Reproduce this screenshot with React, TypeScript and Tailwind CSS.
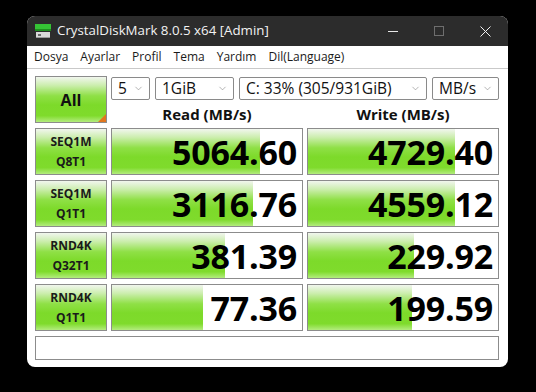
import { ChevronDown } from "lucide-react";

const FONT = { fontFamily: '"Open Sans", "Noto Sans", sans-serif' };

const BAR_BG =
  "bg-[linear-gradient(to_bottom,#f1f6ee_0%,#cdeeb0_18%,#8fe046_42%,#7dda2a_62%,#7fdb2c_86%,#b3ec7e_100%)]";

type Row = {
  name: string;
  sub: string;
  read: string;
  write: string;
  readPct: number;
  writePct: number;
};

const ROWS: Row[] = [
  { name: "SEQ1M", sub: "Q8T1", read: "5064.60", write: "4729.40", readPct: 78, writePct: 77.5 },
  { name: "SEQ1M", sub: "Q1T1", read: "3116.76", write: "4559.12", readPct: 74, writePct: 77.5 },
  { name: "RND4K", sub: "Q32T1", read: "381.39", write: "229.92", readPct: 59.5, writePct: 56 },
  { name: "RND4K", sub: "Q1T1", read: "77.36", write: "199.59", readPct: 48, writePct: 54.5 },
];

function Select({ value, width }: { value: string; width: string }) {
  return (
    <div
      className={`flex h-[23px] ${width} items-center justify-between rounded-[2px] border border-[#8a8a8a] bg-white pl-[6px] pr-[5px] text-[15.5px] text-[#111]`}
    >
      <span className="leading-none">{value}</span>
      <ChevronDown size={11} strokeWidth={1.2} className="text-[#777]" />
    </div>
  );
}

function ResultCell({ value, pct }: { value: string; pct: number }) {
  return (
    <div className="relative h-full border border-[#8c8c8c] bg-white">
      <div className={`absolute inset-y-0 left-0 ${BAR_BG}`} style={{ width: `${pct}%` }} />
      <div className="relative flex h-full items-center justify-end pr-[5px] text-[34px] font-bold leading-none tracking-[-0.2px] text-black">
        {value}
      </div>
    </div>
  );
}

function TitleIcon() {
  return (
    <svg width="16" height="15" viewBox="0 0 16 15">
      <rect x="0" y="0" width="16" height="5" fill="#35c335" />
      <rect x="0" y="5" width="16" height="2" fill="#1f8f1f" />
      <rect x="1" y="8" width="14" height="6" fill="#d9d9d9" />
      <rect x="1" y="13" width="14" height="1" fill="#9a9a9a" />
      <rect x="3" y="10" width="3" height="2" fill="#6b6b6b" />
    </svg>
  );
}

export default function App() {
  return (
    <div className="h-[392px] w-[536px] bg-black pl-[27px] pt-[16px]" style={FONT}>
      <div className="flex h-[351px] w-[481px] flex-col overflow-hidden rounded-[8px] bg-white">
        {/* title bar */}
        <div className="flex h-[30px] items-center bg-[#2c2c2c] pl-[8px] text-white">
          <TitleIcon />
          <span className="ml-[6px] text-[13.3px] leading-none text-[#f2f2f2]">
            CrystalDiskMark 8.0.5 x64 [Admin]
          </span>
          <div className="ml-auto flex h-full items-center">
            <div className="flex h-full w-[46px] items-center justify-center">
              <div className="h-px w-[10px] bg-[#e8e8e8]" />
            </div>
            <div className="flex h-full w-[46px] items-center justify-center">
              <div className="h-[10px] w-[10px] border border-[#6e6e6e]" />
            </div>
            <div className="flex h-full w-[46px] items-center justify-center">
              <svg width="11" height="11" viewBox="0 0 11 11">
                <path d="M0.5 0.5 L10.5 10.5 M10.5 0.5 L0.5 10.5" stroke="#f0f0f0" strokeWidth="1" />
              </svg>
            </div>
          </div>
        </div>

        {/* menu */}
        <div className="flex h-[23px] items-center gap-[12px] border-b border-[#c9c9c9] pl-[7px] text-[12px] text-[#1a1a1a]">
          <span>Dosya</span>
          <span>Ayarlar</span>
          <span>Profil</span>
          <span>Tema</span>
          <span>Yardım</span>
          <span>Dil(Language)</span>
        </div>

        {/* content */}
        <div className="flex flex-col gap-[5px] pl-[8px] pr-[9px] pt-[7px]">
          <div className="grid h-[47px] grid-cols-[72px_1fr] gap-x-[4px]">
            <div
              className={`relative flex items-center justify-center border border-[#8c8c8c] ${BAR_BG} text-[16px] font-bold text-[#111]`}
            >
              All
              <div className="absolute bottom-0 right-0 h-0 w-0 border-b-[8px] border-l-[8px] border-b-[#e2771e] border-l-transparent" />
            </div>
            <div className="flex flex-col">
              <div className="flex gap-[5px] pt-px">
                <Select value="5" width="w-[39px]" />
                <Select value="1GiB" width="w-[79px]" />
                <Select value="C: 33% (305/931GiB)" width="w-[188px]" />
                <Select value="MB/s" width="w-[67px]" />
              </div>
              <div className="grid flex-1 grid-cols-2 gap-x-[4px] pt-[6px] text-[15px] font-bold leading-none text-[#111]">
                <div className="flex items-center justify-center">Read (MB/s)</div>
                <div className="flex items-center justify-center">Write (MB/s)</div>
              </div>
            </div>
          </div>

          {ROWS.map((r, i) => (
            <div key={i} className="grid h-[47px] grid-cols-[72px_192px_192px] gap-x-[4px]">
              <div
                className={`flex flex-col items-center justify-center gap-[8px] border border-[#8c8c8c] ${BAR_BG} text-[12px] font-bold leading-none text-[#1a1a1a]`}
              >
                <span>{r.name}</span>
                <span>{r.sub}</span>
              </div>
              <ResultCell value={r.read} pct={r.readPct} />
              <ResultCell value={r.write} pct={r.writePct} />
            </div>
          ))}

          <div className="h-[24px] border border-[#8c8c8c] bg-white" />
        </div>
      </div>
    </div>
  );
}
